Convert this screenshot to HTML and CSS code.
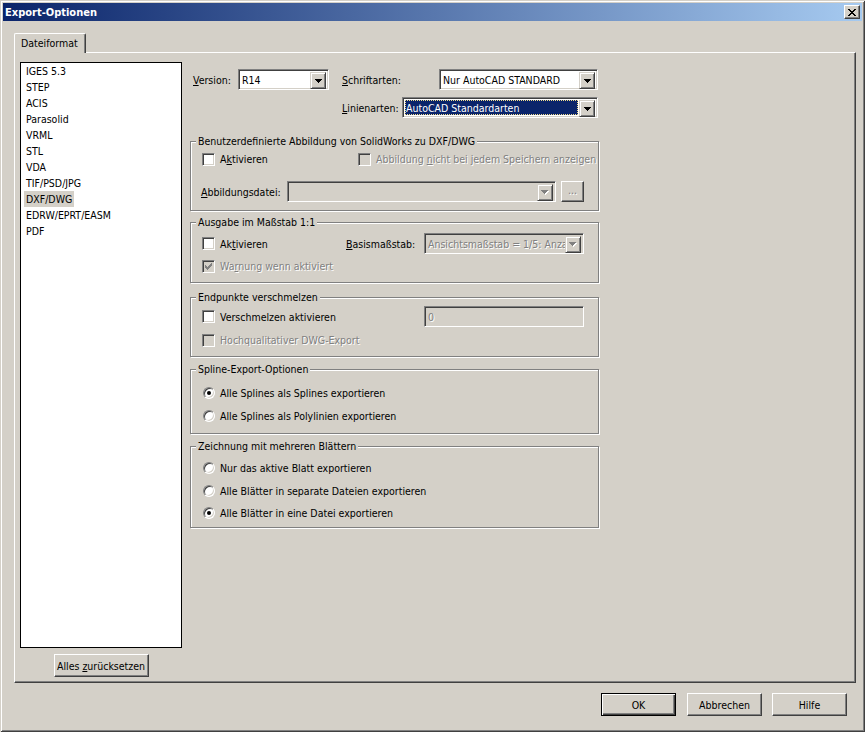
FILE: index.html
```html
<!DOCTYPE html>
<html lang="de">
<head>
<meta charset="utf-8">
<title>Export-Optionen</title>
<link rel="stylesheet" href="styles.css">
</head>
<body>
<div class="window">
  <div class="titlebar">
    <span class="title">Export-Optionen</span>
    <span class="close"><svg width="8" height="7" viewBox="0 0 8 7" shape-rendering="crispEdges"><path fill="#000" d="M0 0h2v1H0z M6 0h2v1H6z M1 1h2v1H1z M5 1h2v1H5z M2 2h4v1H2z M3 3h2v1H3z M2 4h4v1H2z M1 5h2v1H1z M5 5h2v1H5z M0 6h2v1H0z M6 6h2v1H6z"/></svg></span>
  </div>
  <div class="client">
    <div class="tabstrip"><div class="tab">Dateiformat</div></div>
    <div class="panel">
      <div class="leftcol">
        <div class="list">
          <div class="item">IGES 5.3</div>
          <div class="item">STEP</div>
          <div class="item">ACIS</div>
          <div class="item">Parasolid</div>
          <div class="item">VRML</div>
          <div class="item">STL</div>
          <div class="item">VDA</div>
          <div class="item">TIF/PSD/JPG</div>
          <div class="item sel">DXF/DWG</div>
          <div class="item">EDRW/EPRT/EASM</div>
          <div class="item">PDF</div>
        </div>
        <div class="btn reset"><span>Alles <u>z</u>urücksetzen</span></div>
      </div>
      <div class="rightcol">
        <div class="row top1">
          <span class="lbl lbl-version"><u>V</u>ersion:</span>
          <div class="combo cb-r14"><span class="val">R14</span><span class="arrow"><svg width="7" height="4" viewBox="0 0 7 4" shape-rendering="crispEdges"><path fill="#000" d="M0 0h7v1H0z M1 1h5v1H1z M2 2h3v1H2z M3 3h1v1H3z"/></svg></span></div>
          <span class="lbl lbl-schrift"><u>S</u>chriftarten:</span>
          <div class="combo cb-schrift"><span class="val">Nur AutoCAD STANDARD</span><span class="arrow"><svg width="7" height="4" viewBox="0 0 7 4" shape-rendering="crispEdges"><path fill="#000" d="M0 0h7v1H0z M1 1h5v1H1z M2 2h3v1H2z M3 3h1v1H3z"/></svg></span></div>
        </div>
        <div class="row top2">
          <span class="lbl lbl-linien"><u>L</u>inienarten:</span>
          <div class="combo cb-linien"><span class="val selval">AutoCAD Standardarten</span><span class="arrow"><svg width="7" height="4" viewBox="0 0 7 4" shape-rendering="crispEdges"><path fill="#000" d="M0 0h7v1H0z M1 1h5v1H1z M2 2h3v1H2z M3 3h1v1H3z"/></svg></span></div>
        </div>

        <div class="group g1">
          <div class="legend">Benutzerdefinierte Abbildung von SolidWorks zu DXF/DWG</div>
          <div class="row g1a">
            <div class="check c1"><span class="box"></span><span class="txt">A<u>k</u>tivieren</span></div>
            <div class="check"><span class="box dis"></span><span class="txt distxt">Abbildung <u>n</u>icht bei jedem Speichern anzeigen</span></div>
          </div>
          <div class="row g1b">
            <span class="lbl lbl-abb"><u>A</u>bbildungsdatei:</span>
            <div class="combo discombo cb-abb"><span class="val"></span><span class="arrow"><svg width="8" height="5" viewBox="0 0 8 5" shape-rendering="crispEdges"><path fill="#fff" d="M1 1h7v1H1z M2 2h5v1H2z M3 3h3v1H3z M4 4h1v1H4z"/><path fill="#808080" d="M0 0h7v1H0z M1 1h5v1H1z M2 2h3v1H2z M3 3h1v1H3z"/></svg></span></div>
            <div class="btn dots"><span class="distxt">...</span></div>
          </div>
        </div>

        <div class="group g2">
          <div class="legend">Ausgabe im Maßstab 1:1</div>
          <div class="row g2a">
            <div class="check c2"><span class="box"></span><span class="txt">Ak<u>t</u>ivieren</span></div>
            <span class="lbl lbl-basis"><u>B</u>asismaßstab:</span>
            <div class="combo discombo cb-basis"><span class="val distxt">Ansichtsmaßstab = 1/5: Anza</span><span class="arrow"><svg width="8" height="5" viewBox="0 0 8 5" shape-rendering="crispEdges"><path fill="#fff" d="M1 1h7v1H1z M2 2h5v1H2z M3 3h3v1H3z M4 4h1v1H4z"/><path fill="#808080" d="M0 0h7v1H0z M1 1h5v1H1z M2 2h3v1H2z M3 3h1v1H3z"/></svg></span></div>
          </div>
          <div class="row g2b">
            <div class="check"><span class="box dis"><svg width="7" height="7" viewBox="0 0 7 7" shape-rendering="crispEdges"><path fill="#808080" d="M0 2h1v3H0z M1 3h1v3H1z M2 4h1v3H2z M3 3h1v3H3z M4 2h1v3H4z M5 1h1v3H5z M6 0h1v3H6z"/></svg></span><span class="txt distxt">Wa<u>r</u>nung wenn aktiviert</span></div>
          </div>
        </div>

        <div class="group g3">
          <div class="legend">Endpunkte verschmelzen</div>
          <div class="row g3a">
            <div class="check c3"><span class="box"></span><span class="txt">Verschmelzen aktivieren</span></div>
            <div class="field"><span class="val distxt">0</span></div>
          </div>
          <div class="row g3b">
            <div class="check"><span class="box dis"></span><span class="txt distxt">Hochqualitativer DWG-Export</span></div>
          </div>
        </div>

        <div class="group g4">
          <div class="legend">Spline-Export-Optionen</div>
          <div class="row g4a">
            <div class="check"><span class="radio"><span class="dot"></span></span><span class="txt">Alle Splines als Splines exportieren</span></div>
          </div>
          <div class="row g4b">
            <div class="check"><span class="radio"></span><span class="txt">Alle Splines als Polylinien exportieren</span></div>
          </div>
        </div>

        <div class="group g5">
          <div class="legend">Zeichnung mit mehreren Blättern</div>
          <div class="row g5a">
            <div class="check"><span class="radio"></span><span class="txt">Nur das aktive Blatt exportieren</span></div>
          </div>
          <div class="row g5b">
            <div class="check"><span class="radio"></span><span class="txt">Alle Blätter in separate Dateien exportieren</span></div>
          </div>
          <div class="row g5c">
            <div class="check"><span class="radio"><span class="dot"></span></span><span class="txt">Alle Blätter in eine Datei exportieren</span></div>
          </div>
        </div>
      </div>
    </div>
    <div class="footer">
      <div class="btn default"><span>OK</span></div>
      <div class="btn b-cancel"><span>Abbrechen</span></div>
      <div class="btn b-help"><span>Hilfe</span></div>
    </div>
  </div>
</div>
</body>
</html>
```

FILE: styles.css
```css
html, body {
  margin: 0;
  padding: 0;
}

body {
  width: 865px;
  height: 732px;
  overflow: hidden;
  background: #d4d0c8;
  font-family: "DejaVu Sans Condensed", "DejaVu Sans", sans-serif;
  font-stretch: semi-condensed;
  font-size: 10.5px;
  color: #000;
}

u {
  text-decoration: underline;
  text-underline-offset: 1px;
}

.window {
  width: 865px;
  height: 732px;
  box-sizing: border-box;
  padding: 3px;
  background: #d4d0c8;
  box-shadow: inset 1px 1px #d4d0c8, inset -1px -1px #404040, inset 2px 2px #fff, inset -2px -2px #808080;
  display: flex;
  flex-direction: column;
}

.titlebar {
  height: 18px;
  flex: none;
  display: flex;
  align-items: center;
  background: linear-gradient(to right, #0a246a, #a6caf0);
  padding-left: 2px;
}

.title {
  color: #fff;
  font-weight: bold;
  font-size: 11px;
  flex: 1;
}

.close {
  width: 16px;
  height: 14px;
  box-sizing: border-box;
  margin-right: 2px;
  background: #d4d0c8;
  border: 1px solid;
  border-color: #fff #404040 #404040 #fff;
  box-shadow: inset -1px -1px #808080;
  display: flex;
  align-items: center;
  justify-content: center;
}

.client {
  flex: 1;
  padding: 12px 6px 0 11px;
  display: flex;
  flex-direction: column;
}

.tabstrip {
  display: flex;
  height: 20px;
  margin-bottom: -1px;
}

.tab {
  position: relative;
  z-index: 1;
  width: 72px;
  height: 20px;
  box-sizing: border-box;
  background: #d4d0c8;
  border-left: 1px solid #fff;
  border-top: 1px solid #fff;
  border-right: 1px solid #404040;
  border-top-left-radius: 2px;
  border-top-right-radius: 2px;
  box-shadow: inset -1px 0 #808080;
  padding: 0 0 1px 6px;
  display: flex;
  align-items: center;
}

.panel {
  width: 842px;
  height: 631px;
  box-sizing: border-box;
  border: 1px solid;
  border-color: #fff #404040 #404040 #fff;
  box-shadow: inset -1px -1px #808080;
  padding: 9px 0 0 5px;
  display: flex;
}

.leftcol {
  width: 162px;
  display: flex;
  flex-direction: column;
  align-items: center;
}

.list {
  width: 162px;
  height: 586px;
  box-sizing: border-box;
  border: 1px solid #000;
  background: #fff;
  padding: 0 0 0 3px;
}

.item {
  height: 16px;
  line-height: 16px;
  padding: 0 2px;
  width: fit-content;
  white-space: nowrap;
}

.item.sel {
  background: #d4d0c8;
}

.btn {
  box-sizing: border-box;
  height: 23px;
  background: #d4d0c8;
  border: 1px solid;
  border-color: #fff #404040 #404040 #fff;
  box-shadow: inset -1px -1px #808080;
  display: flex;
  align-items: center;
  justify-content: center;
  white-space: nowrap;
}

.reset {
  width: 95px;
  margin-top: 6px;
}

.rightcol {
  width: 410px;
  margin: 7px 0 0 8px;
  display: flex;
  flex-direction: column;
}

.row {
  display: flex;
  align-items: center;
}

.lbl {
  white-space: nowrap;
  flex: none;
}

.top1 {
  height: 21px;
}

.lbl-version {
  width: 48px;
  box-sizing: border-box;
  padding-left: 3px;
}

.lbl-schrift {
  width: 97px;
  margin-left: 13px;
}

.top2 {
  height: 21px;
  margin-top: 7px;
  padding-left: 152px;
}

.lbl-linien {
  width: 60px;
}

.combo {
  height: 21px;
  box-sizing: border-box;
  border: 1px solid;
  border-color: #808080 #fff #fff #808080;
  box-shadow: inset 1px 1px #404040, inset -1px -1px #d4d0c8;
  background: #fff;
  padding: 2px;
  display: flex;
  flex: none;
}

.combo .val {
  flex: 1;
  min-width: 0;
  overflow: hidden;
  white-space: nowrap;
  line-height: 17px;
  padding-left: 1px;
}

.combo .selval {
  background: #0a246a;
  color: #fff;
  outline: 1px dotted #f0dc8c;
  outline-offset: -1px;
  margin-right: 1px;
  padding-left: 1px;
}

.arrow {
  width: 16px;
  height: 17px;
  box-sizing: border-box;
  flex: none;
  background: #d4d0c8;
  border: 1px solid;
  border-color: #d4d0c8 #404040 #404040 #d4d0c8;
  box-shadow: inset 1px 1px #fff, inset -1px -1px #808080;
  display: flex;
  align-items: center;
  justify-content: center;
}

.discombo {
  background: #d4d0c8;
}

.cb-r14 { width: 91px; }
.cb-schrift { width: 159px; }
.cb-linien { width: 196px; }
.cb-abb { width: 269px; }
.cb-basis { width: 160px; }

.field {
  width: 160px;
  height: 21px;
  box-sizing: border-box;
  border: 1px solid;
  border-color: #808080 #fff #fff #808080;
  box-shadow: inset 1px 1px #404040, inset -1px -1px #d4d0c8;
  background: #d4d0c8;
  padding: 2px 3px;
  display: flex;
  align-items: center;
}

.distxt {
  color: #808080;
  text-shadow: 1px 1px 0 #fff;
}

.group {
  width: 409px;
  box-sizing: border-box;
  border: 1px solid #808080;
  box-shadow: inset 1px 1px #fff, 1px 1px #fff;
  padding: 0 0 0 11px;
  display: flex;
  flex-direction: column;
}

.legend {
  width: fit-content;
  height: 13px;
  line-height: 13px;
  margin: -7px 0 -6px -6px;
  padding: 0 2px;
  background: #d4d0c8;
  white-space: nowrap;
}

.check {
  display: flex;
  align-items: center;
  white-space: nowrap;
}

.check .txt {
  margin-left: 5px;
}

.box {
  width: 13px;
  height: 13px;
  box-sizing: border-box;
  flex: none;
  border: 1px solid;
  border-color: #808080 #fff #fff #808080;
  box-shadow: inset 1px 1px #404040, inset -1px -1px #d4d0c8;
  background: #fff;
  display: flex;
  align-items: center;
  justify-content: center;
}

.box.dis {
  background: #d4d0c8;
}

.radio {
  width: 12px;
  height: 12px;
  box-sizing: border-box;
  flex: none;
  margin-left: 1px;
  border-radius: 50%;
  border: 1px solid;
  border-color: #808080 #fff #fff #808080;
  box-shadow: inset 1px 1px #404040, inset -1px -1px #d4d0c8;
  background: #fff;
  display: flex;
  align-items: center;
  justify-content: center;
}

.dot {
  width: 4px;
  height: 4px;
  border-radius: 50%;
  background: #000;
}

/* group 1 */
.g1 { margin-top: 23px; height: 70px; }
.g1a { height: 16px; margin-top: 9px; }
.c1 { width: 156px; }
.g1b { height: 21px; margin-top: 14px; }
.lbl-abb { width: 86px; margin-left: -1px; }
.dots { width: 23px; height: 21px; margin-left: 5px; padding-bottom: 4px; }

/* group 2 */
.g2 { margin-top: 11px; height: 61px; }
.g2a { height: 21px; margin-top: 10px; }
.c2 { width: 144px; }
.lbl-basis { width: 78px; }
.g2b { height: 16px; margin-top: 4px; }

/* group 3 */
.g3 { margin-top: 14px; height: 60px; }
.g3a { height: 21px; margin-top: 8px; }
.c3 { width: 222px; }
.g3b { height: 16px; margin-top: 5px; }

/* group 4 */
.g4 { margin-top: 12px; height: 65px; }
.g4a { height: 16px; margin-top: 15px; }
.g4b { height: 16px; margin-top: 7px; }

/* group 5 */
.g5 { margin-top: 12px; height: 82px; }
.g5a { height: 16px; margin-top: 13px; }
.g5b { height: 16px; margin-top: 7px; }
.g5c { height: 16px; margin-top: 6px; }

.footer {
  display: flex;
  justify-content: flex-end;
  padding: 10px 9px 0 0;
}

.footer .btn {
  width: 75px;
}

.btn.default {
  border: 1px solid #000;
  box-shadow: inset 1px 1px #fff, inset -1px -1px #404040, inset -2px -2px #808080;
}

.b-cancel { margin-left: 11px; }
.b-help { margin-left: 10px; }
```
